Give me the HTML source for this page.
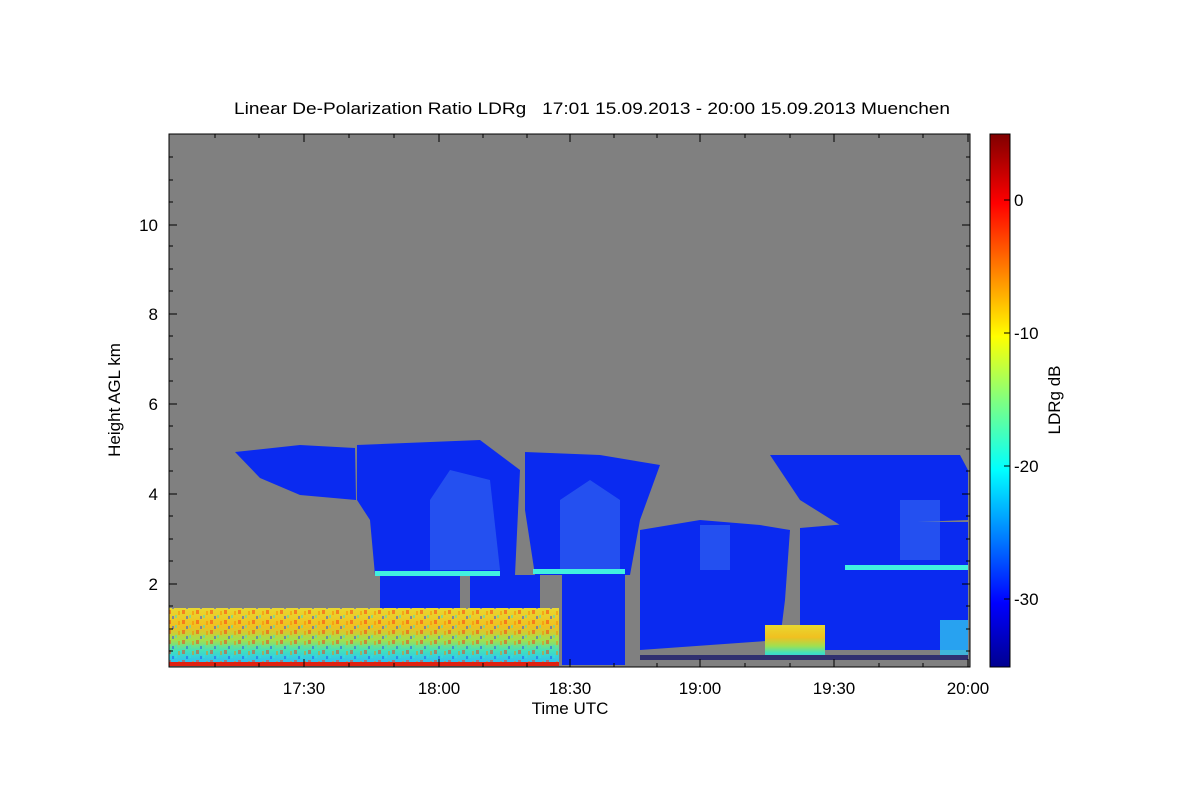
<!DOCTYPE html>
<html><head><meta charset="utf-8"><style>
body{margin:0;background:#fff;width:1200px;height:800px;overflow:hidden}
text{font-family:"Liberation Sans",sans-serif;fill:#000}
</style></head><body>
<svg width="1200" height="800" viewBox="0 0 1200 800" xmlns="http://www.w3.org/2000/svg">
<defs>
<linearGradient id="jet" x1="0" y1="1" x2="0" y2="0">
<stop offset="0" stop-color="#00008f"/>
<stop offset="0.12" stop-color="#0000ff"/>
<stop offset="0.37" stop-color="#00ffff"/>
<stop offset="0.5" stop-color="#80ff80"/>
<stop offset="0.62" stop-color="#ffff00"/>
<stop offset="0.87" stop-color="#ff0000"/>
<stop offset="1" stop-color="#800000"/>
</linearGradient>
<linearGradient id="low" x1="0" y1="0" x2="0" y2="1">
<stop offset="0" stop-color="#e8d830"/>
<stop offset="0.35" stop-color="#f0c020"/>
<stop offset="0.6" stop-color="#a0e050"/>
<stop offset="0.8" stop-color="#40e0c0"/>
<stop offset="1" stop-color="#30c0f0"/>
</linearGradient>
<pattern id="noise" width="14" height="10" patternUnits="userSpaceOnUse">
<rect x="0" y="0" width="3" height="4" fill="#ff3010"/>
<rect x="7" y="5" width="2" height="3" fill="#30e0e0"/>
<rect x="10" y="1" width="2" height="4" fill="#ff8000"/>
<rect x="4" y="6" width="2" height="3" fill="#2040ff"/>
</pattern>
</defs>
<text x="592" y="114" font-size="17" text-anchor="middle" xml:space="preserve" style="white-space:pre" textLength="716" lengthAdjust="spacingAndGlyphs">Linear De-Polarization Ratio LDRg   17:01 15.09.2013 - 20:00 15.09.2013 Muenchen</text>
<rect x="169" y="134" width="801" height="533" fill="#808080"/>
<g fill="#0a2af0">
<polygon points="235,452 300,445 355,448 356,500 300,495 260,478"/>
<polygon points="357,445 480,440 520,470 515,575 375,575 370,520 357,500"/>
<polygon points="525,452 600,455 660,465 640,520 630,575 535,575 525,510"/>
<rect x="562" y="575" width="63" height="90"/>
<polygon points="640,530 700,520 760,525 790,530 785,600 780,640 640,650"/>
<polygon points="770,455 960,455 968,470 968,520 840,525 800,500"/>
<polygon points="800,528 870,522 968,522 968,650 800,650"/>
<rect x="380" y="575" width="80" height="90"/>
<rect x="470" y="575" width="70" height="60"/>
</g>
<g fill="#3a70f0" opacity="0.55">
<polygon points="430,500 450,470 490,480 500,570 430,570"/>
<polygon points="560,500 590,480 620,500 620,570 560,570"/>
<rect x="700" y="525" width="30" height="45"/>
<rect x="900" y="500" width="40" height="60"/>
</g>
<rect x="169" y="608" width="390" height="54" fill="url(#low)"/>
<rect x="169" y="608" width="390" height="54" fill="url(#noise)" opacity="0.5"/>
<rect x="765" y="625" width="60" height="35" fill="url(#low)"/>
<rect x="940" y="620" width="28" height="35" fill="#30c0f0" opacity="0.8"/>
<rect x="169" y="662" width="390" height="4" fill="#e02010"/>
<rect x="640" y="655" width="328" height="5" fill="#303070"/>
<rect x="375" y="571" width="125" height="5" fill="#40f0e0"/>
<rect x="533" y="569" width="92" height="5" fill="#40f0e0"/>
<rect x="845" y="565" width="123" height="5" fill="#40f0e0"/>
<rect x="169" y="134" width="801" height="533" fill="none" stroke="#000" stroke-width="1"/>
<g stroke="#000" stroke-width="1">
<path d="M169 651h4M169 629h4M169 606h4M169 561h4M169 539h4M169 516h4M169 471h4M169 449h4M169 426h4M169 381h4M169 359h4M169 336h4M169 291h4M169 269h4M169 246h4M169 202h4M169 180h4M169 157h4"/>
<path d="M970 651h-4M970 629h-4M970 606h-4M970 561h-4M970 539h-4M970 516h-4M970 471h-4M970 449h-4M970 426h-4M970 381h-4M970 359h-4M970 336h-4M970 291h-4M970 269h-4M970 246h-4M970 202h-4M970 180h-4M970 157h-4"/>
<path d="M215 667v-4M259 667v-4M349 667v-4M394 667v-4M483 667v-4M527 667v-4M614 667v-4M657 667v-4M745 667v-4M790 667v-4M879 667v-4M923 667v-4"/>
<path d="M215 134v4M259 134v4M349 134v4M394 134v4M483 134v4M527 134v4M614 134v4M657 134v4M745 134v4M790 134v4M879 134v4M923 134v4"/>
<line x1="169" y1="584" x2="177" y2="584"/><line x1="169" y1="494" x2="177" y2="494"/>
<line x1="169" y1="404" x2="177" y2="404"/><line x1="169" y1="314" x2="177" y2="314"/>
<line x1="169" y1="225" x2="177" y2="225"/>
<line x1="970" y1="584" x2="962" y2="584"/><line x1="970" y1="494" x2="962" y2="494"/>
<line x1="970" y1="404" x2="962" y2="404"/><line x1="970" y1="314" x2="962" y2="314"/>
<line x1="970" y1="225" x2="962" y2="225"/>
<line x1="304" y1="667" x2="304" y2="659"/><line x1="439" y1="667" x2="439" y2="659"/>
<line x1="570" y1="667" x2="570" y2="659"/><line x1="700" y1="667" x2="700" y2="659"/>
<line x1="834" y1="667" x2="834" y2="659"/><line x1="968" y1="667" x2="968" y2="659"/>
<line x1="304" y1="134" x2="304" y2="142"/><line x1="439" y1="134" x2="439" y2="142"/>
<line x1="570" y1="134" x2="570" y2="142"/><line x1="700" y1="134" x2="700" y2="142"/>
<line x1="834" y1="134" x2="834" y2="142"/><line x1="968" y1="134" x2="968" y2="142"/>
</g>
<g font-size="17" text-anchor="end">
<text x="158" y="590">2</text><text x="158" y="500">4</text><text x="158" y="410">6</text>
<text x="158" y="320">8</text><text x="158" y="231">10</text>
</g>
<g font-size="17" text-anchor="middle">
<text x="304" y="694">17:30</text><text x="439" y="694">18:00</text><text x="570" y="694">18:30</text>
<text x="700" y="694">19:00</text><text x="834" y="694">19:30</text><text x="968" y="694">20:00</text>
<text x="570" y="714">Time UTC</text>
</g>
<text transform="translate(120,400) rotate(-90)" font-size="17" text-anchor="middle">Height AGL km</text>
<rect x="990" y="134" width="20" height="533" fill="url(#jet)" stroke="#000"/>
<g stroke="#000"><line x1="1010" y1="200" x2="1004" y2="200"/><line x1="1010" y1="333" x2="1004" y2="333"/><line x1="1010" y1="466" x2="1004" y2="466"/><line x1="1010" y1="599" x2="1004" y2="599"/></g>
<g font-size="17"><text x="1014" y="206">0</text><text x="1014" y="339">-10</text><text x="1014" y="472">-20</text><text x="1014" y="605">-30</text></g>
<text transform="translate(1060,400) rotate(-90)" font-size="17" text-anchor="middle">LDRg dB</text>
</svg>
</body></html>
